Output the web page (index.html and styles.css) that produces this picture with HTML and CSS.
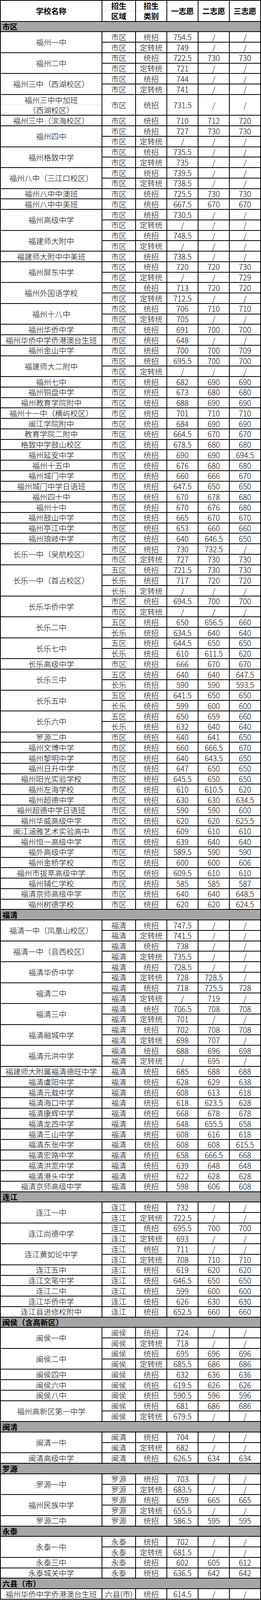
FILE: index.html
```html
<!DOCTYPE html>
<html lang="zh-CN">
<head>
<meta charset="utf-8">
<title>录取分数线</title>
<link rel="stylesheet" href="styles.css">
</head>
<body>
<div class="t">
<div class="h r2">学校名称</div><div class="h r2 split"><span>招生</span><span>区域</span></div><div class="h r2 split"><span>招生</span><span>类别</span></div><div class="h r2">一志愿</div><div class="h r2">二志愿</div><div class="h r2">三志愿</div>
<div class="sec">市区</div>
<div class="r2">福州一中</div><div>市区</div><div>统招</div><div>754.5</div><div>/</div><div>/</div>
<div>市区</div><div>定转统</div><div>749</div><div>/</div><div>/</div>
<div class="r2">福州二中</div><div>市区</div><div>统招</div><div>722.5</div><div>730</div><div>730</div>
<div>市区</div><div>定转统</div><div>721</div><div>/</div><div>/</div>
<div class="r2">福州三中（西湖校区）</div><div>市区</div><div>统招</div><div>744</div><div>/</div><div>/</div>
<div>市区</div><div>定转统</div><div>741</div><div>/</div><div>/</div>
<div class="r2 split"><span>福州三中中加班</span><span>（西湖校区）</span></div><div class="r2">市区</div><div class="r2">统招</div><div class="r2">731.5</div><div class="r2">/</div><div class="r2">/</div>
<div>福州三中（滨海校区）</div><div>市区</div><div>统招</div><div>710</div><div>712</div><div>720</div>
<div class="r2">福州四中</div><div>市区</div><div>统招</div><div>727</div><div>730</div><div>730</div>
<div>市区</div><div>定转统</div><div>/</div><div>/</div><div>/</div>
<div class="r2">福州格致中学</div><div>市区</div><div>统招</div><div>735.5</div><div>/</div><div>/</div>
<div>市区</div><div>定转统</div><div>735</div><div>/</div><div>/</div>
<div class="r2">福州八中（三江口校区）</div><div>市区</div><div>统招</div><div>739.5</div><div>/</div><div>/</div>
<div>市区</div><div>定转统</div><div>738.5</div><div>/</div><div>/</div>
<div>福州八中中澳班</div><div>市区</div><div>统招</div><div>725.5</div><div>730</div><div>730</div>
<div>福州八中中美班</div><div>市区</div><div>统招</div><div>667.5</div><div>670</div><div>670</div>
<div class="r2">福州高级中学</div><div>市区</div><div>统招</div><div>730.5</div><div>/</div><div>/</div>
<div>市区</div><div>定转统</div><div>/</div><div>/</div><div>/</div>
<div class="r2">福建师大附中</div><div>市区</div><div>统招</div><div>748.5</div><div>/</div><div>/</div>
<div>市区</div><div>定转统</div><div>/</div><div>/</div><div>/</div>
<div>福建师大附中中美班</div><div>市区</div><div>统招</div><div>738.5</div><div>/</div><div>/</div>
<div class="r2">福州屏东中学</div><div>市区</div><div>统招</div><div>720</div><div>720</div><div>730</div>
<div>市区</div><div>定转统</div><div>/</div><div>/</div><div>729</div>
<div class="r2">福州外国语学校</div><div>市区</div><div>统招</div><div>713</div><div>720</div><div>720</div>
<div>市区</div><div>定转统</div><div>712.5</div><div>/</div><div>/</div>
<div class="r2">福州十八中</div><div>市区</div><div>统招</div><div>706</div><div>710</div><div>710</div>
<div>市区</div><div>定转统</div><div>705</div><div>/</div><div>/</div>
<div>福州华侨中学</div><div>市区</div><div>统招</div><div>691</div><div>700</div><div>700</div>
<div>福州华侨中学侨港澳台生班</div><div>市区</div><div>统招</div><div>648</div><div>/</div><div>/</div>
<div>福州金山中学</div><div>市区</div><div>统招</div><div>700</div><div>700</div><div>709</div>
<div class="r2">福建师大二附中</div><div>市区</div><div>统招</div><div>695.5</div><div>700</div><div>700</div>
<div>市区</div><div>定转统</div><div>/</div><div>/</div><div>/</div>
<div>福州七中</div><div>市区</div><div>统招</div><div>682</div><div>690</div><div>690</div>
<div>福州铜盘中学</div><div>市区</div><div>统招</div><div>673</div><div>680</div><div>680</div>
<div>福州教育学院附中</div><div>市区</div><div>统招</div><div>688</div><div>690</div><div>690</div>
<div>福州十一中（横屿校区）</div><div>市区</div><div>统招</div><div>701</div><div>710</div><div>710</div>
<div>闽江学院附中</div><div>市区</div><div>统招</div><div>684</div><div>690</div><div>690</div>
<div>教育学院二附中</div><div>市区</div><div>统招</div><div>664.5</div><div>670</div><div>670</div>
<div>格致中学鼓山校区</div><div>市区</div><div>统招</div><div>678.5</div><div>680</div><div>680</div>
<div>福州延安中学</div><div>市区</div><div>统招</div><div>690</div><div>690</div><div>694.5</div>
<div>福州十五中</div><div>市区</div><div>统招</div><div>676</div><div>680</div><div>680</div>
<div>福州城门中学</div><div>市区</div><div>统招</div><div>660</div><div>666</div><div>670</div>
<div>福州城门中学日语班</div><div>市区</div><div>统招</div><div>647.5</div><div>650</div><div>650</div>
<div>福州四十中</div><div>市区</div><div>统招</div><div>670</div><div>678</div><div>680</div>
<div>福州十中</div><div>市区</div><div>统招</div><div>670</div><div>676</div><div>680</div>
<div>福州鼓山中学</div><div>市区</div><div>统招</div><div>665</div><div>670</div><div>670</div>
<div>福州亭江中学</div><div>市区</div><div>统招</div><div>653</div><div>660</div><div>660</div>
<div>福州琅岐中学</div><div>市区</div><div>统招</div><div>640</div><div>646.5</div><div>650</div>
<div class="r2">长乐一中（吴航校区）</div><div>市区</div><div>统招</div><div>730</div><div>732.5</div><div>/</div>
<div>市区</div><div>定转统</div><div>727</div><div>730</div><div>730</div>
<div class="r3">长乐一中（首占校区）</div><div>五区</div><div>统招</div><div>721.5</div><div>730</div><div>730</div>
<div>长乐</div><div>统招</div><div>717</div><div>720</div><div>720</div>
<div>长乐</div><div>定转统</div><div>/</div><div>/</div><div>/</div>
<div class="r2">长乐华侨中学</div><div>市区</div><div>统招</div><div>694.5</div><div>700</div><div>700</div>
<div>市区</div><div>定转统</div><div>/</div><div>/</div><div>/</div>
<div class="r2">长乐二中</div><div>五区</div><div>统招</div><div>650</div><div>656.5</div><div>660</div>
<div>长乐</div><div>统招</div><div>634.5</div><div>640</div><div>640</div>
<div class="r2">长乐七中</div><div>五区</div><div>统招</div><div>644.5</div><div>650</div><div>650</div>
<div>长乐</div><div>统招</div><div>610</div><div>611.5</div><div>620</div>
<div>长乐高级中学</div><div>市区</div><div>统招</div><div>666</div><div>670</div><div>670</div>
<div class="r2">长乐三中</div><div>五区</div><div>统招</div><div>640</div><div>640</div><div>647.5</div>
<div>长乐</div><div>统招</div><div>590</div><div>590</div><div>593.5</div>
<div class="r2">长乐五中</div><div>五区</div><div>统招</div><div>641.5</div><div>650</div><div>650</div>
<div>长乐</div><div>统招</div><div>599</div><div>600</div><div>600</div>
<div class="r2">长乐六中</div><div>五区</div><div>统招</div><div>650</div><div>659</div><div>660</div>
<div>长乐</div><div>统招</div><div>632</div><div>640</div><div>640</div>
<div>罗源二中</div><div>市区</div><div>统招</div><div>640</div><div>641</div><div>650</div>
<div>福州文博中学</div><div>市区</div><div>统招</div><div>660</div><div>666.5</div><div>670</div>
<div>福州黎明中学</div><div>市区</div><div>统招</div><div>640</div><div>643.5</div><div>650</div>
<div>福州日升中学</div><div>市区</div><div>统招</div><div>647</div><div>650</div><div>650</div>
<div>福州阳光实验学校</div><div>市区</div><div>统招</div><div>645.5</div><div>650</div><div>650</div>
<div>福州左海学校</div><div>市区</div><div>统招</div><div>610</div><div>610.5</div><div>620</div>
<div>福州超德中学</div><div>市区</div><div>统招</div><div>630</div><div>630</div><div>634.5</div>
<div>福州超德中学日语班</div><div>市区</div><div>统招</div><div>590</div><div>590</div><div>600</div>
<div>福州华威高级中学</div><div>市区</div><div>统招</div><div>620</div><div>620</div><div>625.5</div>
<div>闽江涵雅艺术实验高中</div><div>市区</div><div>统招</div><div>609</div><div>610</div><div>610</div>
<div>福州恒一高级中学</div><div>市区</div><div>统招</div><div>639</div><div>640</div><div>640</div>
<div>福外高级中学</div><div>市区</div><div>统招</div><div>589.5</div><div>590</div><div>590</div>
<div>福州金桥学校</div><div>市区</div><div>统招</div><div>600</div><div>600</div><div>606</div>
<div>福州市拔萃高级中学</div><div>市区</div><div>统招</div><div>609.5</div><div>610</div><div>610</div>
<div>福州辅仁学校</div><div>市区</div><div>统招</div><div>585</div><div>585</div><div>587</div>
<div>福清京师高级中学</div><div>市区</div><div>统招</div><div>640</div><div>640</div><div>648.5</div>
<div>福州树德学校</div><div>市区</div><div>统招</div><div>620</div><div>620</div><div>624.5</div>
<div class="sec">福清</div>
<div class="r2">福清一中（凤凰山校区）</div><div>福清</div><div>统招</div><div>747.5</div><div>/</div><div>/</div>
<div>福清</div><div>定转统</div><div>741.5</div><div>/</div><div>/</div>
<div class="r2">福清一中（音西校区）</div><div>福清</div><div>统招</div><div>738</div><div>/</div><div>/</div>
<div>福清</div><div>定转统</div><div>735.5</div><div>/</div><div>/</div>
<div class="r2">福清华侨中学</div><div>福清</div><div>统招</div><div>728.5</div><div>/</div><div>/</div>
<div>福清</div><div>定转统</div><div>728</div><div>728.5</div><div>/</div>
<div class="r2">福清二中</div><div>福清</div><div>统招</div><div>718</div><div>725.5</div><div>728</div>
<div>福清</div><div>定转统</div><div>/</div><div>719</div><div>/</div>
<div class="r2">福清三中</div><div>福清</div><div>统招</div><div>706.5</div><div>708</div><div>708</div>
<div>福清</div><div>定转统</div><div>701</div><div>/</div><div>/</div>
<div class="r2">福清融城中学</div><div>福清</div><div>统招</div><div>702</div><div>708</div><div>708</div>
<div>福清</div><div>定转统</div><div>698</div><div>707</div><div>/</div>
<div class="r2">福清元洪中学</div><div>福清</div><div>统招</div><div>688</div><div>696</div><div>698</div>
<div>福清</div><div>定转统</div><div>/</div><div>695</div><div>/</div>
<div>福建师大附属福清德旺中学</div><div>福清</div><div>统招</div><div>685</div><div>688</div><div>688</div>
<div>福清虞阳中学</div><div>福清</div><div>统招</div><div>628</div><div>629</div><div>638</div>
<div>福清元载中学</div><div>福清</div><div>统招</div><div>608</div><div>613</div><div>618</div>
<div>福清海口中学</div><div>福清</div><div>统招</div><div>618</div><div>623.5</div><div>628</div>
<div>福清康辉中学</div><div>福清</div><div>统招</div><div>668</div><div>678</div><div>678</div>
<div>福清龙西中学</div><div>福清</div><div>统招</div><div>648</div><div>655.5</div><div>658</div>
<div>福清三山中学</div><div>福清</div><div>统招</div><div>608</div><div>616</div><div>618</div>
<div>福清东张中学</div><div>福清</div><div>统招</div><div>608</div><div>608</div><div>615.5</div>
<div>福清宏路中学</div><div>福清</div><div>统招</div><div>658</div><div>666.5</div><div>668</div>
<div>福清洪宽中学</div><div>福清</div><div>统招</div><div>639</div><div>648</div><div>648</div>
<div>福清港头中学</div><div>福清</div><div>统招</div><div>622</div><div>628</div><div>628</div>
<div>福清京师高级中学</div><div>福清</div><div>统招</div><div>598</div><div>606</div><div>608</div>
<div class="sec">连江</div>
<div class="r2">连江一中</div><div>连江</div><div>统招</div><div>732</div><div>/</div><div>/</div>
<div>连江</div><div>定转统</div><div>722.5</div><div>/</div><div>/</div>
<div class="r2">连江尚德中学</div><div>连江</div><div>统招</div><div>695.5</div><div>700</div><div>700</div>
<div>连江</div><div>定转统</div><div>693</div><div>/</div><div>/</div>
<div class="r2">连江黄如论中学</div><div>连江</div><div>统招</div><div>711</div><div>/</div><div>/</div>
<div>连江</div><div>定转统</div><div>708</div><div>710</div><div>710</div>
<div>连江五中</div><div>连江</div><div>统招</div><div>619</div><div>620</div><div>620</div>
<div>连江文笔中学</div><div>连江</div><div>统招</div><div>646.5</div><div>650</div><div>650</div>
<div>连江二中</div><div>连江</div><div>统招</div><div>599</div><div>600</div><div>600</div>
<div>连江华侨中学</div><div>连江</div><div>统招</div><div>626</div><div>630</div><div>630</div>
<div>连江县进修校附中</div><div>连江</div><div>统招</div><div>652.5</div><div>660</div><div>660</div>
<div class="sec">闽侯（含高新区）</div>
<div class="r2">闽侯一中</div><div>闽侯</div><div>统招</div><div>724</div><div>/</div><div>/</div>
<div>闽侯</div><div>定转统</div><div>718</div><div>/</div><div>/</div>
<div class="r2">闽侯二中</div><div>闽侯</div><div>统招</div><div>695</div><div>696</div><div>696</div>
<div>闽侯</div><div>定转统</div><div>685.5</div><div>686</div><div>686</div>
<div>闽侯四中</div><div>闽侯</div><div>统招</div><div>632</div><div>636</div><div>636</div>
<div>闽侯六中</div><div>闽侯</div><div>统招</div><div>619.5</div><div>626</div><div>626</div>
<div>闽侯八中</div><div>闽侯</div><div>统招</div><div>590.5</div><div>596</div><div>596</div>
<div class="r2">福州高新区第一中学</div><div>闽侯</div><div>统招</div><div>681</div><div>686</div><div>686</div>
<div>闽侯</div><div>定转统</div><div>679.5</div><div>/</div><div>/</div>
<div class="sec">闽清</div>
<div class="r2">闽清一中</div><div>闽清</div><div>统招</div><div>704</div><div>/</div><div>/</div>
<div>闽清</div><div>定转统</div><div>682</div><div>/</div><div>/</div>
<div>闽清高级中学</div><div>闽清</div><div>统招</div><div>626.5</div><div>634</div><div>634</div>
<div class="sec">罗源</div>
<div class="r2">罗源一中</div><div>罗源</div><div>统招</div><div>703</div><div>/</div><div>/</div>
<div>罗源</div><div>定转统</div><div>683.5</div><div>/</div><div>/</div>
<div class="r2">福州民族中学</div><div>罗源</div><div>统招</div><div>659</div><div>665</div><div>665</div>
<div>罗源</div><div>定转统</div><div>655.5</div><div>/</div><div>/</div>
<div>罗源二中</div><div>罗源</div><div>统招</div><div>586.5</div><div>595</div><div>595</div>
<div class="sec">永泰</div>
<div class="r2">永泰一中</div><div>永泰</div><div>统招</div><div>702</div><div>/</div><div>/</div>
<div>永泰</div><div>定转统</div><div>681.5</div><div>/</div><div>/</div>
<div>永泰三中</div><div>永泰</div><div>统招</div><div>602</div><div>605</div><div>612</div>
<div>永泰城关中学</div><div>永泰</div><div>统招</div><div>636.5</div><div>642</div><div>642</div>
<div class="sec">六县（市）</div>
<div>福州华侨中学侨港澳台生班</div><div>六县(市)</div><div>统招</div><div>614.5</div><div>/</div><div>/</div>
</div>
</body>
</html>
```

FILE: styles.css
```css
html, body {
  margin: 0;
  padding: 0;
  background: #ffffff;
}

.t {
  display: grid;
  grid-template-columns: 258px 84px 78px 78px 78px 78px;
  grid-auto-rows: 24.758px;
  gap: 2px;
  padding: 2px;
  width: 668px;
  box-sizing: border-box;
  background: #000000;
  font-family: "Noto Sans CJK SC", "Noto Sans CJK JP", sans-serif;
  font-size: 19.5px;
  font-weight: 300;
  line-height: 1;
  color: #000000;
}

.t > div {
  display: flex;
  align-items: center;
  justify-content: center;
  background: #ffffff;
  white-space: nowrap;
}

.t > .r2 {
  grid-row: span 2;
}

.t > .r3 {
  grid-row: span 3;
}

.t > .h {
  font-weight: 700;
}

.t > .split {
  flex-direction: column;
  align-items: stretch;
}

.split > span {
  flex: 1;
  display: flex;
  align-items: center;
  justify-content: center;
}

.split > span + span {
  border-top: 1px solid #d9d9d9;
}

.t > .sec {
  grid-column: 1 / -1;
  justify-content: flex-start;
  padding-left: 4px;
  background: #a6a6a6;
  font-weight: 700;
}
```
